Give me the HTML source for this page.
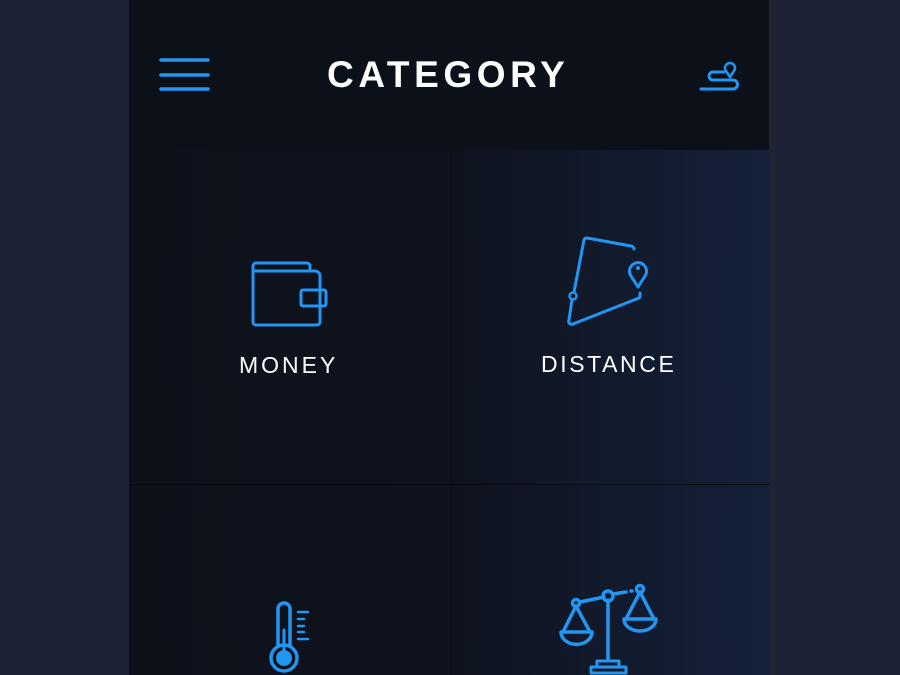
<!DOCTYPE html>
<html><head><style>
html,body{margin:0;padding:0;width:900px;height:675px;overflow:hidden;background:#1e2235;font-family:"Liberation Sans",sans-serif}
.panel{position:absolute;left:129px;top:0;width:640px;height:675px;background:#0c1018}
.cells{position:absolute;left:129px;top:150px;width:640px;height:525px;background:linear-gradient(90deg,#0d111a 0%,#0e131e 50%,#15213a 100%)}
.vl{position:absolute;left:451px;top:150px;width:1px;height:525px;background:#0a0e16}
.hl{position:absolute;left:129px;top:484px;width:640px;height:1px;background:#070a10}
.t{position:absolute;color:#fff;letter-spacing:2px}
</style></head><body>
<div class="panel"></div>
<div class="cells"></div>
<div class="vl"></div><div class="hl"></div>
<div class="t" style="left:327px;top:54px;font-size:37px;font-weight:bold;letter-spacing:4.6px">CATEGORY</div>
<div class="t" style="left:239px;top:352px;font-size:23px;letter-spacing:3px">MONEY</div>
<div class="t" style="left:541px;top:351px;font-size:23px;letter-spacing:2.6px">DISTANCE</div>
<svg width="900" height="675" style="position:absolute;left:0;top:0" fill="none" stroke="#2196f3" stroke-width="3.5" stroke-linecap="round" stroke-linejoin="round">
<path d="M161 60H208M161 75H208M161 89H208"/>
<path d="M701 89H733a4.5 4.5 0 0 0 0-9H713a4 4 0 0 1 0-8H724" stroke-width="3"/>
<path d="M730 77l-4-6a5 5 0 1 1 8 0z" stroke-width="2.5"/>
<path d="M253 271V266a3 3 0 0 1 3-3H307a3 3 0 0 1 3 3v5" stroke-width="3"/>
<path d="M253 271v51a3 3 0 0 0 3 3H317a3 3 0 0 0 3-3V291M320 306V276a5 5 0 0 0-5-5H253" stroke-width="3"/>
<rect x="301" y="290" width="25" height="16" rx="2" stroke-width="3"/>
<path d="M634 249a3 3 0 0 0-3-3L587 238a3 3 0 0 0-3 2L574 292M572 300L569 320a3 3 0 0 0 4 4L639 298a2 2 0 0 0 1-2v-3" stroke-width="3"/>
<circle cx="573" cy="296" r="3.5" stroke-width="2.5"/>
<path d="M638 287l-7-11a8.5 8.5 0 1 1 14 0z" stroke-width="3"/>
<circle cx="638" cy="268" r="1" stroke-width="2"/>
<path d="M278 645V609a6 6 0 0 1 12 0V645" stroke-width="3.5"/>
<circle cx="284" cy="658" r="13" stroke-width="3.5"/>
<circle cx="284" cy="658" r="8" fill="#2196f3" stroke="none"/>
<path d="M284 650V630" stroke-width="3"/>
<path d="M298 612H308M298 619H304M298 626H304M298 632H304M298 639H308" stroke-width="2.5"/>
<path d="M608 600V660M580 602L604 597M613 594L626 592M631 591h1"/>
<circle cx="608" cy="596" r="5"/><circle cx="576" cy="603" r="3.5"/><circle cx="640" cy="589" r="3.5"/>
<path d="M576 606L563 632M576 606L590 632M561 632h31a15 12 0 0 1-31 0z"/>
<path d="M640 592L626 619M640 592L654 619M624 619h32a16 12 0 0 1-32 0z"/>
<path d="M597 661h22v6h-22zM591 667h35v6h-35z" stroke-width="3"/>
</svg>
</body></html>
